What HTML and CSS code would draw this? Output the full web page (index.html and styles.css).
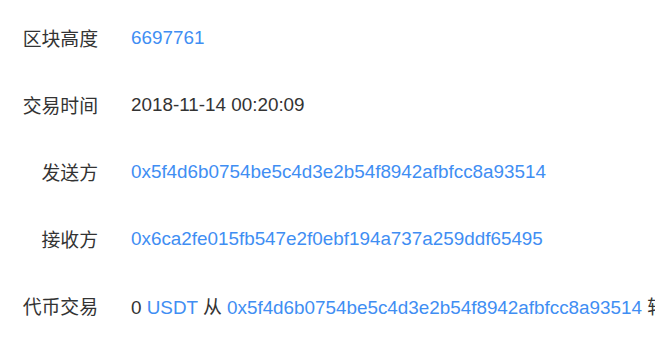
FILE: index.html
```html
<!DOCTYPE html>
<html lang="zh">
<head>
<meta charset="utf-8">
<link rel="stylesheet" href="styles.css">
</head>
<body>
<div class="detail">
  <div class="row"><div class="label">区块高度</div><div class="value"><a class="link">6697761</a></div></div>
  <div class="row"><div class="label">交易时间</div><div class="value">2018-11-14 00:20:09</div></div>
  <div class="row"><div class="label">发送方</div><div class="value"><a class="link">0x5f4d6b0754be5c4d3e2b54f8942afbfcc8a93514</a></div></div>
  <div class="row"><div class="label">接收方</div><div class="value"><a class="link">0x6ca2fe015fb547e2f0ebf194a737a259ddf65495</a></div></div>
  <div class="row"><div class="label">代币交易</div><div class="value">0 <a class="link">USDT</a> 从 <a class="link">0x5f4d6b0754be5c4d3e2b54f8942afbfcc8a93514</a> 转 <a class="link">0x6ca2fe015fb547e2f0ebf194a737a259ddf65495</a></div></div>
</div>
</body>
</html>
```
FILE: styles.css
```css
html, body {
  margin: 0;
  padding: 0;
  background: #fff;
  overflow: hidden;
}
.detail {
  padding-top: 4px;
  font-family: "Liberation Sans", "Noto Sans CJK SC", sans-serif;
  font-size: 18.85px;
  color: #333;
}
.row {
  display: flex;
  align-items: center;
  height: 67px;
  gap: 33px;
  white-space: nowrap;
}
.label {
  width: 98px;
  flex: none;
  text-align: right;
}
.value {
  flex: none;
}
.link {
  color: #3f8ef3;
  text-decoration: none;
}
```
